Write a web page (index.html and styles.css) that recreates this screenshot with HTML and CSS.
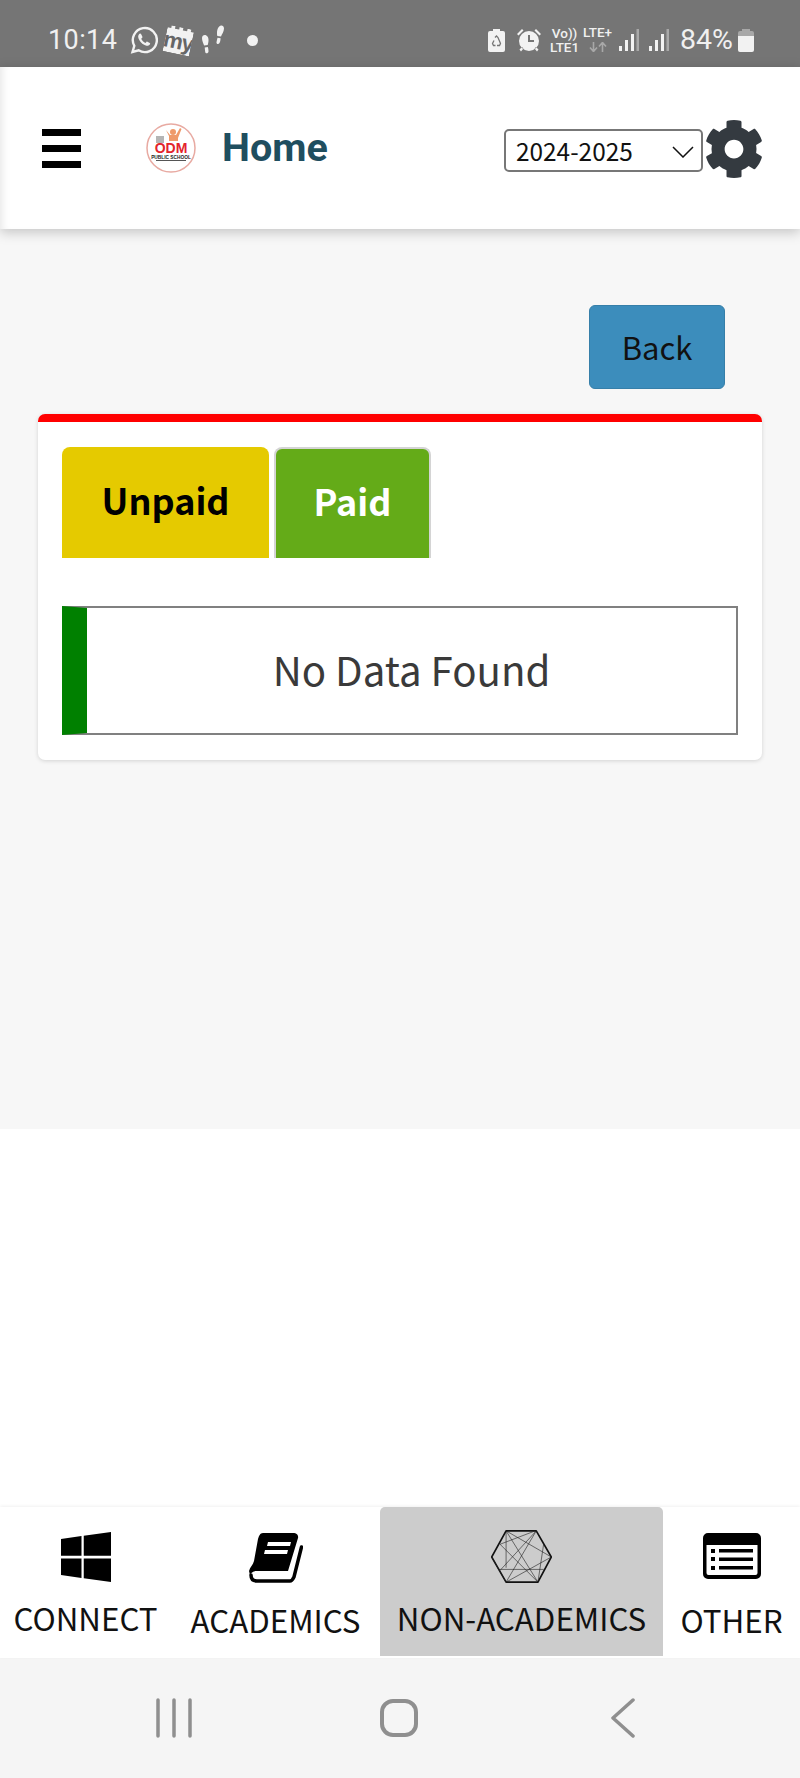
FILE: index.html
```html
<!DOCTYPE html>
<html lang="en">
<head>
<meta charset="utf-8">
<title>Home</title>
<link rel="stylesheet" href="styles.css">
</head>
<body>
<div class="phone">
  <div class="status">
    <span class="clock">10:14</span>
    <svg class="si si-wa" viewBox="0 0 28 28"><path class="st" d="M2.500 26l1.800-6.200A12 12 0 1 1 8.600 24.300z"/><path class="fw" d="M10 7.500c-1.200.6-2 2-1.800 3.500.5 3.800 4.500 8 8.300 8.800 1.500.3 3-.6 3.600-1.800.2-.5.100-.9-.3-1.100l-2.400-1.200c-.4-.2-.8-.1-1 .2l-.9 1.100c-1.900-.7-3.500-2.300-4.300-4.200l1-1c.3-.3.3-.7.200-1l-1.100-2.400c-.2-.5-1-.8-1.300-.9z"/></svg>
    <span class="my"><span class="my-t">my</span></span>
    <svg class="si si-ft" viewBox="0 0 24 30"><path class="fw" d="M1 13c0-2.500 2-3.500 3.500-3 2.500.8 3.200 3.500 3 6-.1 1.500-.5 3-.8 4l-3.600.5C2.500 18.500 1 16 1 13zM3.700 22.500l3.100-.5c.6 1.500.7 3.500.7 4.500-.1 2-3 2.500-3.300.5-.1-1.500-.4-3-.5-4.500z"/><path class="fw" d="M23 3.500c0-2.300-1.700-3.500-3.200-3-2.500.8-3.600 3.700-3.800 6.500-.1 1.500 0 3 .3 4l3.700.5c.7-2 3-5 3-8zM16.500 12.800l3.100.5c-.1 1.800-.4 3.600-1.100 4.800-1 1.500-3.300.9-3-.9.2-1.500.7-3 1-4.400z"/></svg>
    <span class="dot"></span>
    <span class="status-gap"></span>
    <svg class="si si-rb" viewBox="0 0 17 23"><path class="fw" d="M5 0h7v2h3a2 2 0 0 1 2 2v17a2 2 0 0 1-2 2H2a2 2 0 0 1-2-2V4a2 2 0 0 1 2-2h3z"/><path class="rc" d="M7 8.500L8.500 7l1.500 1.500L12.500 14.500 11.500 16.500H9M7.500 16.500H5.500L4.500 14.500L6 11.500"/></svg>
    <svg class="si si-al" viewBox="0 0 24 24"><path class="fw" fill-rule="evenodd" d="M12 3a10 10 0 1 1 0 20 10 10 0 0 1 0-20zM11 7v7h6v-2h-4V7zM0 6l5-5 1.500 1.500-5 5zM24 6l-5-5-1.500 1.500 5 5zM2.500 21.500l2.500-2.500 1.500 1.500-2.500 3zM21.500 21.500L19 19l-1.500 1.500 2.500 3z"/></svg>
    <span class="volte"><span>Vo))</span><span>LTE1</span></span>
    <span class="lte"><span>LTE+</span><svg class="arrows" viewBox="0 0 18 10"><path d="M4.500 0V9M1 5.500L4.500 9.500 8 5.500M13.500 10V1M10 4.500L13.500 .5 17 4.500"/></svg></span>
    <svg class="si si-sg" viewBox="0 0 20 22"><rect class="fw" x="0" y="17" width="3" height="5"/><rect class="fw" x="6" y="11" width="3" height="11"/><rect class="fw" x="12" y="5" width="3" height="17"/><rect class="fd" x="17.500" y="0" width="2.500" height="22"/></svg>
    <svg class="si si-sg" viewBox="0 0 20 22"><rect class="fw" x="0" y="17" width="3" height="5"/><rect class="fw" x="6" y="11" width="3" height="11"/><rect class="fw" x="12" y="5" width="3" height="17"/><rect class="fd" x="17.500" y="0" width="2.500" height="22"/></svg>
    <span class="pct">84%</span>
    <svg class="si si-bt" viewBox="0 0 16 23"><path class="fd" d="M4 0h8v2h2a2 2 0 0 1 2 2v4H0V4a2 2 0 0 1 2-2h2z"/><path class="fw" d="M0 7h16v14a2 2 0 0 1-2 2H2a2 2 0 0 1-2-2z"/></svg>
  </div>

  <header class="topbar">
    <div class="burger"><span></span><span></span><span></span></div>
    <svg class="logo" viewBox="0 0 50 50">
      <circle cx="25" cy="25" r="24" fill="#fff" stroke="#e8aaa2" stroke-width="1.500"/>
      <rect x="10" y="13" width="8" height="7" fill="#b5b5b5"/>
      <circle cx="27" cy="9" r="3" fill="#ef9a6a"/>
      <path d="M20 7l4 5h6l4-7 1.500 1-3.500 9v3h-9v-5z" fill="#ef9a6a"/>
      <text x="25" y="30" class="logo-a" text-anchor="middle">ODM</text>
      <text x="25" y="36" class="logo-b" text-anchor="middle">PUBLIC SCHOOL</text>
      <rect x="10" y="37" width="30" height="1" fill="#555"/>
    </svg>
    <h1 class="title">Home</h1>
    <div class="year">
      <select class="year-select"><option>2024-2025</option></select>
      <svg class="year-chev" viewBox="0 0 22 12"><path d="M1 1l10 10L21 1" fill="none" stroke="#111" stroke-width="1.500"/></svg>
    </div>
    <svg class="gear" viewBox="0 0 512 512"><path fill="#343a40" d="M487.400 315.700l-42.600-24.600c4.300-23.200 4.300-47 0-70.200l42.600-24.600c4.900-2.800 7.100-8.600 5.500-14-11.100-35.600-30-67.800-54.700-94.600-3.800-4.100-10-5.100-14.800-2.300L380.800 110c-17.900-15.400-38.500-27.300-60.800-35.100V25.800c0-5.600-3.900-10.500-9.400-11.700-36.700-8.200-74.300-7.800-109.200 0-5.500 1.200-9.400 6.100-9.400 11.700V75c-22.200 7.900-42.800 19.800-60.800 35.100L88.700 85.500c-4.900-2.800-11-1.900-14.800 2.300-24.700 26.700-43.600 58.900-54.700 94.600-1.700 5.400.6 11.200 5.500 14L67.300 221c-4.300 23.200-4.300 47 0 70.200l-42.600 24.600c-4.900 2.800-7.100 8.600-5.500 14 11.100 35.600 30 67.800 54.700 94.600 3.800 4.100 10 5.100 14.800 2.300l42.600-24.600c17.900 15.400 38.500 27.300 60.800 35.100v49.200c0 5.600 3.900 10.500 9.400 11.700 36.700 8.200 74.300 7.800 109.200 0 5.500-1.200 9.400-6.100 9.400-11.700v-49.200c22.200-7.900 42.800-19.800 60.800-35.100l42.600 24.600c4.900 2.800 11 1.900 14.800-2.300 24.700-26.700 43.600-58.900 54.700-94.600 1.500-5.500-.7-11.300-5.600-14.100zM256 336c-44.100 0-80-35.900-80-80s35.900-80 80-80 80 35.900 80 80-35.900 80-80 80z"/></svg>
  </header>

  <main class="content">
    <div class="actions"><button class="back">Back</button></div>
    <section class="card">
      <div class="tabs">
        <div class="tab tab-unpaid">Unpaid</div>
        <div class="tab tab-paid">Paid</div>
      </div>
      <div class="empty"><div class="empty-text">No Data Found</div></div>
    </section>
  </main>

  <div class="blank"></div>

  <nav class="bottom">
    <div class="item item-connect">
      <svg class="ic ic-win" viewBox="0 32 448 448" preserveAspectRatio="none"><path d="M0 93.700l183.600-25.300v177.400H0V93.700zm0 324.600l183.600 25.300V268.400H0v149.900zm203.800 28L448 480V268.400H203.800v177.900zm0-380.600v180.100H448V32L203.800 65.700z"/></svg>
      <span class="lbl">CONNECT</span>
    </div>
    <div class="item item-acad">
      <svg class="ic ic-book" viewBox="0 0 54 50">
        <path d="M14 0H45a4 4 0 0 1 4 5L39 38H8C4 38 2 40 1 42L0 38C1 34 4 32 5 28L9 6C10 3 11 0 14 0Z"/>
        <path fill="#fff" d="M19 9h23l-1 4H18zM16 17h23l-1 4H15z"/>
        <path fill="none" stroke="#000" stroke-width="3.500" stroke-linecap="round" d="M2 42C2 46 4 48 8 48H41C43 48 44 46 45 44L52.500 14"/>
      </svg>
      <span class="lbl">ACADEMICS</span>
    </div>
    <div class="item item-non">
      <svg class="ic ic-hex" viewBox="-2 -2 182 157">
        <path fill="none" stroke="#111" stroke-width="5" stroke-linejoin="round" d="M0 78L43 0H133L178 78L138 153H43Z"/>
        <path fill="none" stroke="#222" stroke-width="1.800" d="M43 0V110M25 40L130 0M25 40L138 153M133 0L25 118M0 78L43 153M43 153L133 0M20 115H155M155 40L138 153M43 0L178 78M43 153L178 78M43 0L138 153"/>
      </svg>
      <span class="lbl">NON-ACADEMICS</span>
    </div>
    <div class="item item-other">
      <svg class="ic ic-list" viewBox="0 0 58 46">
        <path fill-rule="evenodd" d="M5 0H53a5 5 0 0 1 5 5V41a5 5 0 0 1-5 5H5a5 5 0 0 1-5-5V5a5 5 0 0 1 5-5zM3.500 12V40a2 2 0 0 0 2 2H52.500a2 2 0 0 0 2-2V12z"/>
        <path d="M8 16h4v4H8zM16 16H50v3.500H16zM8 24h4v4H8zM16 24.500H50V28H16zM8 33h4v4H8zM16 33H50v3.500H16z"/>
      </svg>
      <span class="lbl">OTHER</span>
    </div>
  </nav>

  <div class="sysnav">
    <svg class="sys" viewBox="0 0 40 40"><path d="M3 2V38M19 2V38M35 2V38" stroke-width="3.500"/></svg>
    <svg class="sys" viewBox="0 0 40 40"><rect x="3" y="3" width="34" height="34" rx="11" stroke-width="4"/></svg>
    <svg class="sys" viewBox="0 0 40 40"><path d="M30 2L10 20L30 38" stroke-width="3.500"/></svg>
  </div>
</div>
</body>
</html>
```
FILE: styles.css
```css
* { box-sizing: border-box; }
html, body { margin: 0; padding: 0; }
body { font-family: "Noto Sans CJK SC", "Noto Sans", sans-serif; background: #fff; }
.phone { width: 800px; height: 1778px; display: flex; flex-direction: column; overflow: hidden; }

/* status bar */
.status { height: 67px; flex: none; background: #757575; color: #f0f0f0; display: flex; align-items: center; padding: 13px 46px 0 48px; font-family: Roboto, sans-serif; }
.clock { font-size: 27px; font-weight: 400; letter-spacing: .4px; line-height: 30px; }
.si { display: block; flex: none; }
.fw { fill: #f2f2f2; }
.fd { fill: #a8a8a8; }
.st { fill: none; stroke: #f2f2f2; stroke-width: 2.400; }
.rc { fill: none; stroke: #757575; stroke-width: 1.300; }
.si-wa { width: 28px; height: 28px; margin-left: 13px; }
.my { width: 27px; height: 27px; margin-left: 7px; background: #f2f2f2; transform: rotate(12deg); display: flex; align-items: flex-end; justify-content: center; padding-bottom: 2px; clip-path: polygon(0 10%, 14% 10%, 14% 0, 28% 0, 28% 10%, 44% 10%, 44% 0, 58% 0, 58% 10%, 74% 10%, 74% 0, 88% 0, 88% 10%, 100% 10%, 100% 100%, 0 100%); }
.my-t { color: #666; font-size: 22px; font-weight: 700; line-height: 20px; font-family: "Liberation Sans", sans-serif; letter-spacing: -1px; }
.si-ft { width: 24px; height: 30px; margin-left: 9px; }
.dot { width: 11px; height: 11px; border-radius: 50%; background: #f2f2f2; margin-left: 22px; }
.status-gap { flex: 1; }
.si-rb { width: 17px; height: 23px; }
.si-al { width: 24px; height: 24px; margin-left: 12px; }
.volte, .lte { display: flex; flex-direction: column; align-items: center; font-size: 13.500px; line-height: 14px; font-weight: 500; }
.volte { margin-left: 9px; width: 29px; }
.lte { margin-left: 4px; width: 29px; margin-top: -3px; }
.arrows { display: block; width: 18px; height: 10px; margin-top: 3px; fill: none; stroke: #a8a8a8; stroke-width: 1.600; }
.si-sg { width: 20px; height: 22px; margin-left: 7px; }
.si-sg + .si-sg { margin-left: 10px; }
.pct { font-size: 28.500px; font-weight: 400; margin-left: 11px; line-height: 30px; }
.si-bt { width: 16px; height: 23px; margin-left: 5px; }

/* header */
.topbar { height: 162px; flex: none; background: #fff; display: flex; align-items: center; padding: 0 36px 0 42px; box-shadow: 0 3px 12px rgba(0,0,0,.22), inset 8px 0 8px -6px rgba(0,0,0,.1); position: relative; z-index: 2; }
.burger { width: 39px; display: flex; flex-direction: column; gap: 9px; }
.burger span { display: block; height: 7px; background: #000; }
.logo { width: 50px; height: 50px; margin-left: 65px; flex: none; }
.logo-a { font-family: "Liberation Sans", sans-serif; font-weight: 700; font-size: 14px; fill: #e3242b; }
.logo-b { font-family: "Liberation Sans", sans-serif; font-size: 4.800px; font-weight: 700; fill: #222; }
.title { margin: 0 0 0 26px; font-family: Roboto, sans-serif; font-size: 39.500px; font-weight: 700; line-height: 44px; color: #1f4e5f; }
.year { margin-left: auto; margin-top: 5px; margin-right: 1px; position: relative; width: 199px; height: 43px; }
.year-select { width: 100%; height: 100%; appearance: none; -webkit-appearance: none; background: #fff; border: 2px solid #777; border-radius: 5px; padding: 0 0 0 10px; font-family: "Noto Sans CJK SC", sans-serif; font-size: 24.400px; color: #111; }
.year-chev { position: absolute; right: 9px; top: 17px; width: 22px; height: 12px; }
.gear { width: 60px; height: 60px; flex: none; margin-top: 2px; }

/* content */
.content { height: 900px; flex: none; background: #f7f7f7; padding: 76px 38px 0; }
.actions { display: flex; justify-content: flex-end; padding-right: 37px; margin-bottom: 25px; }
.back { width: 136px; height: 84px; background: #3c8dbc; border: 1px solid #367fa9; border-radius: 6px; color: #111; font-family: "Noto Sans CJK SC", sans-serif; font-size: 31px; padding: 0 0 2px; }
.card { background: #fff; border-top: 8px solid #f00; border-radius: 7px; padding: 25px 24px 25px; box-shadow: 0 1px 4px rgba(0,0,0,.15); }
.tabs { display: flex; align-items: flex-end; gap: 5px; height: 111px; margin-bottom: 48px; }
.tab { display: flex; align-items: center; justify-content: center; font-weight: 700; font-size: 36px; border-radius: 8px 8px 0 0; padding-bottom: 7px; }
.tab-unpaid { width: 207px; height: 111px; background: #e5ca00; color: #000; }
.tab-paid { width: 157px; height: 111px; background: #64ab18; color: #fff; border: 2px solid #d4d4d4; border-bottom: 0; }
.empty { height: 129px; border: 2px solid #808080; border-left: 25px solid #008000; display: flex; align-items: center; justify-content: center; padding-bottom: 3px; }
.empty-text { font-size: 40.200px; color: #3a3a3a; line-height: 48px; }

.blank { flex: 1; background: #fff; }

/* bottom nav */
.bottom { height: 151px; flex: none; background: #fff; display: flex; box-shadow: 0 -1px 3px rgba(0,0,0,.06); position: relative; }
.item { display: flex; flex-direction: column; align-items: center; color: #111; }
.item-connect { width: 171px; padding-top: 25px; }
.item-acad { width: 209px; padding-top: 26px; }
.item-non { width: 283px; background: #ccc; border-radius: 5px 5px 0 0; padding-top: 23px; height: 149px; }
.item-other { width: 137px; padding-top: 26px; }
.ic { display: block; flex: none; }
.ic-win { width: 50px; height: 50px; }
.ic-book { width: 54px; height: 50px; }
.ic-hex { width: 61px; height: 53px; }
.ic-list { width: 58px; height: 46px; margin-bottom: 4px; }
.lbl { font-size: 31.300px; line-height: 40px; margin-top: 17px; white-space: nowrap; }
.item-connect .lbl { margin-top: 16px; }
.item-non .lbl { margin-top: 15px; }

/* system nav */
.sysnav { height: 120px; flex: none; background: #f5f5f5; display: flex; justify-content: center; align-items: center; gap: 184px; padding: 0 2px 0 0; }
.sys { width: 40px; height: 40px; fill: none; stroke: #8f8f8f; stroke-linecap: round; stroke-linejoin: round; }
```
